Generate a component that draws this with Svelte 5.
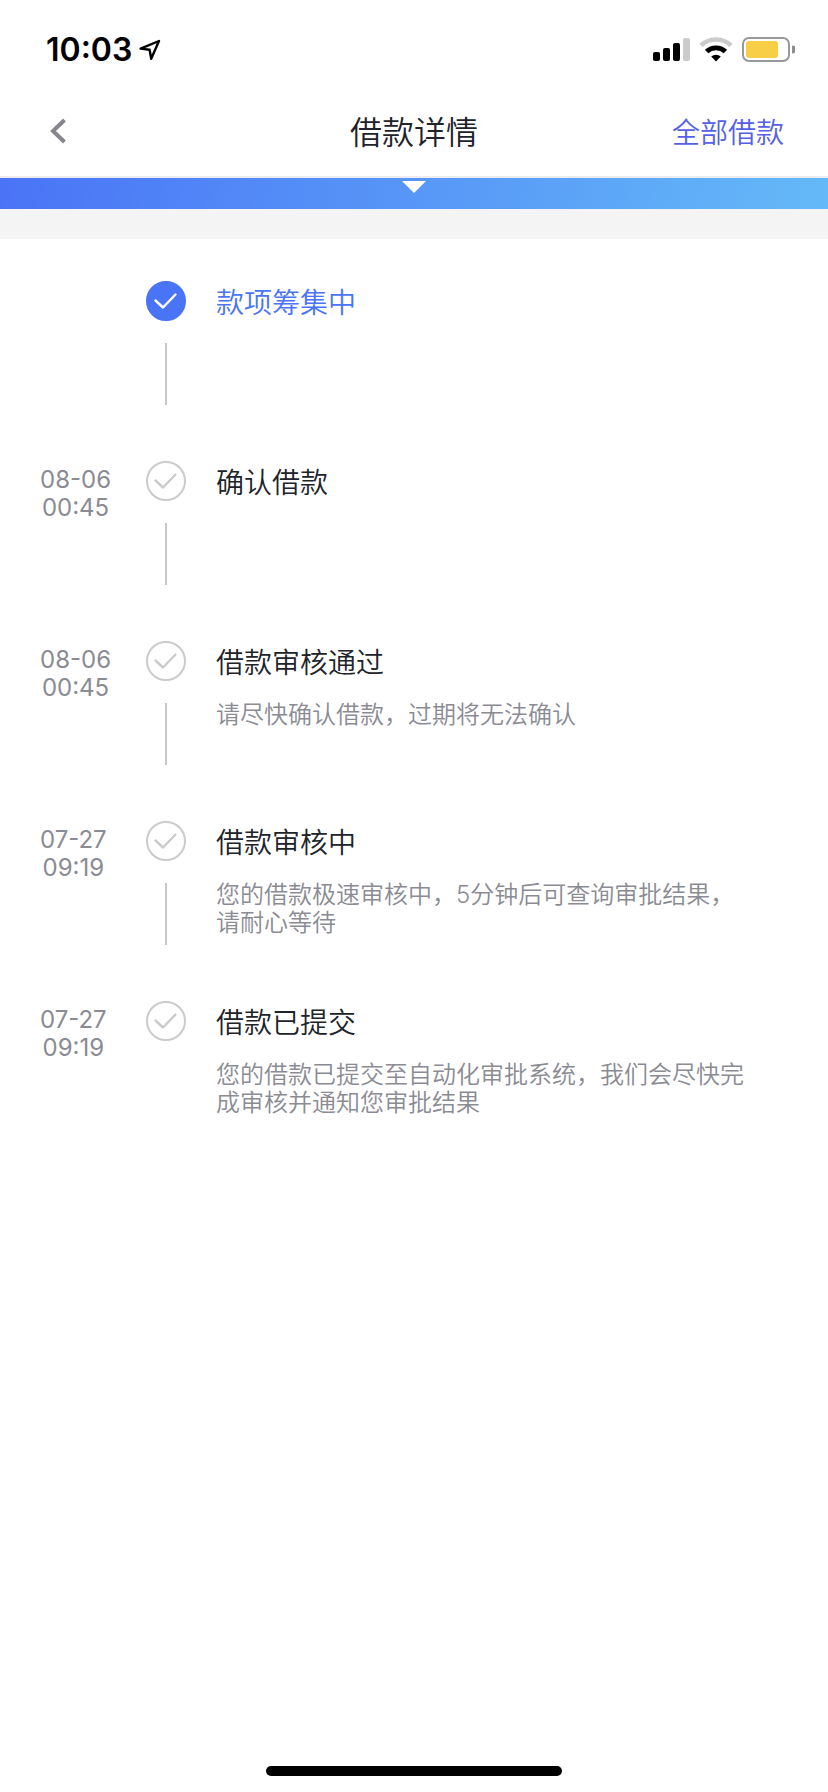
<script>
  const steps = [
    { title: '款项筹集中', active: true },
    { date: '08-06', time: '00:45', title: '确认借款' },
    { date: '08-06', time: '00:45', title: '借款审核通过', desc: '请尽快确认借款，过期将无法确认' },
    {
      date: '07-27',
      time: '09:19',
      title: '借款审核中',
      desc: '您的借款极速审核中，5分钟后可查询审批结果，请耐心等待'
    },
    {
      date: '07-27',
      time: '09:19',
      title: '借款已提交',
      desc: '您的借款已提交至自动化审批系统，我们会尽快完成审核并通知您审批结果'
    }
  ];
</script>

<div class="screen">
  <div class="status">
    <span class="clock">10:03</span>
    <svg class="location" width="22" height="22" viewBox="0 0 22 22" fill="none" stroke="#000" stroke-width="2.4" stroke-linejoin="round">
      <path d="M1.6 9.6L20 2L12.2 19.8L10.6 10.8z"/>
    </svg>
    <div class="indicators">
      <svg width="37" height="26" viewBox="0 0 37 26">
        <rect x="0" y="15" width="7" height="9" rx="2"/>
        <rect x="10" y="11" width="7" height="13" rx="2"/>
        <rect x="20" y="6" width="7" height="18" rx="2"/>
        <rect x="30" y="1" width="7" height="23" rx="2" fill="#cbcbcb"/>
      </svg>
      <svg width="34" height="26" viewBox="0 0 34 26">
        <path d="M2 8.4A22 22 0 0 1 32 8.4" fill="none" stroke="#cbcbcb" stroke-width="4.6"/>
        <path d="M7.6 14.6A13.6 13.6 0 0 1 26.4 14.6" fill="none" stroke="#000" stroke-width="4.8"/>
        <path d="M12.2 19.6A7.4 7.4 0 0 1 21.8 19.6L17 24.4z"/>
      </svg>
      <svg width="53" height="26" viewBox="0 0 53 26">
        <rect x="1" y="1" width="46" height="23" rx="6" fill="none" stroke="#98989a" stroke-width="2"/>
        <rect x="4" y="4" width="32" height="17" rx="3" fill="#f7ce46"/>
        <path d="M50 8.5A4 4 0 0 1 50 16.5z" fill="#8e8e90"/>
      </svg>
    </div>
  </div>

  <header>
    <button class="back" aria-label="返回">
      <svg width="17" height="26" viewBox="0 0 17 26" fill="none" stroke="#85868e" stroke-width="4">
        <path d="M14.5 2L3 13L14.5 24"/>
      </svg>
    </button>
    <h1>借款详情</h1>
    <a class="all" href="#all">全部借款</a>
  </header>

  <div class="banner">
    <svg width="24" height="12" viewBox="0 0 24 12" fill="#fff">
      <path d="M0 0H24L12 12z"/>
    </svg>
  </div>

  <ol class="steps">
    {#each steps as step, i}
      <li class="step" class:active={step.active}>
        <div class="when">
          {#if step.date}
            <time>{step.date}<br />{step.time}</time>
          {/if}
        </div>
        <div class="track">
          <svg width="40" height="40" viewBox="0 0 40 40" fill="none">
            <circle class="dot" cx="20" cy="20" r="19" stroke-width="2"/>
            <path class="tick" d="M9.5 19.5L17 26.5L29.5 13.5" stroke-width="2.4" stroke-linecap="round" stroke-linejoin="round"/>
          </svg>
          {#if i < steps.length - 1}
            <span class="line"></span>
          {/if}
        </div>
        <div class="body">
          <h2>{step.title}</h2>
          {#if step.desc}
            <p>{step.desc}</p>
          {/if}
        </div>
      </li>
    {/each}
  </ol>

  <div class="home"></div>
</div>

<style>
  :global(body) {
    background: #fff;
  }

  .screen {
    display: flex;
    flex-direction: column;
    min-height: 100vh;
    background: #fff;
    color: #202329;
    font-family: Inter, 'Noto Sans CJK SC', sans-serif;
  }

  .status {
    display: flex;
    align-items: center;
    height: 88px;
    padding: 12px 33px 0 46px;
    box-sizing: border-box;
  }

  .clock {
    color: #000;
    font-size: 32px;
    font-weight: 600;
    line-height: 40px;
  }

  .location {
    margin-left: 7px;
  }

  .indicators {
    display: flex;
    gap: 9px;
    margin-left: auto;
  }

  header {
    display: grid;
    grid-template-columns: 1fr auto 1fr;
    align-items: center;
    height: 90px;
    padding: 0 44px;
    border-bottom: 2px solid #ececee;
    box-sizing: border-box;
  }

  .back {
    display: flex;
    justify-self: start;
    padding: 0 6px 2px;
    border: none;
    background: none;
    cursor: pointer;
  }

  h1 {
    margin: 0;
    padding-top: 2px;
    font-size: 32px;
    font-weight: 350;
    line-height: 40px;
  }

  .all {
    justify-self: end;
    padding-top: 2px;
    color: #5560e6;
    font-size: 28px;
    font-weight: 350;
    line-height: 40px;
    text-decoration: none;
  }

  .banner {
    display: flex;
    justify-content: center;
    height: 28px;
    padding-top: 3px;
    border-bottom: 30px solid #f4f4f4;
    background: linear-gradient(100deg, #4a74f6, #64b9f8);
  }

  .steps {
    margin: 0;
    padding: 42px 72px 42px 40px;
    list-style: none;
  }

  .step {
    display: grid;
    grid-template-columns: 106px 40px 1fr;
    min-height: 180px;
  }

  .when {
    padding-top: 5px;
  }

  time {
    display: inline-block;
    color: #8a8b93;
    font-size: 24px;
    line-height: 28px;
    text-align: center;
  }

  .track {
    display: flex;
    flex-direction: column;
    align-items: center;
    gap: 22px;
  }

  .dot {
    stroke: #cbcbcb;
  }

  .tick {
    stroke: #cbcbcb;
  }

  .active .dot {
    fill: #4a74f6;
    stroke: #4a74f6;
  }

  .active .tick {
    stroke: #fff;
  }

  .line {
    width: 2px;
    height: 62px;
    background: #c8c8c8;
  }

  .body {
    padding-left: 30px;
  }

  h2 {
    margin: 0;
    font-size: 28px;
    font-weight: 350;
    line-height: 44px;
  }

  .active h2 {
    color: #4a74f6;
  }

  p {
    margin: 16px 0 0;
    color: #8a8b93;
    font-size: 24px;
    font-weight: 350;
    line-height: 28px;
  }

  .home {
    align-self: center;
    width: 296px;
    height: 10px;
    margin: auto 0 16px;
    border-radius: 5px;
    background: #000;
  }
</style>
